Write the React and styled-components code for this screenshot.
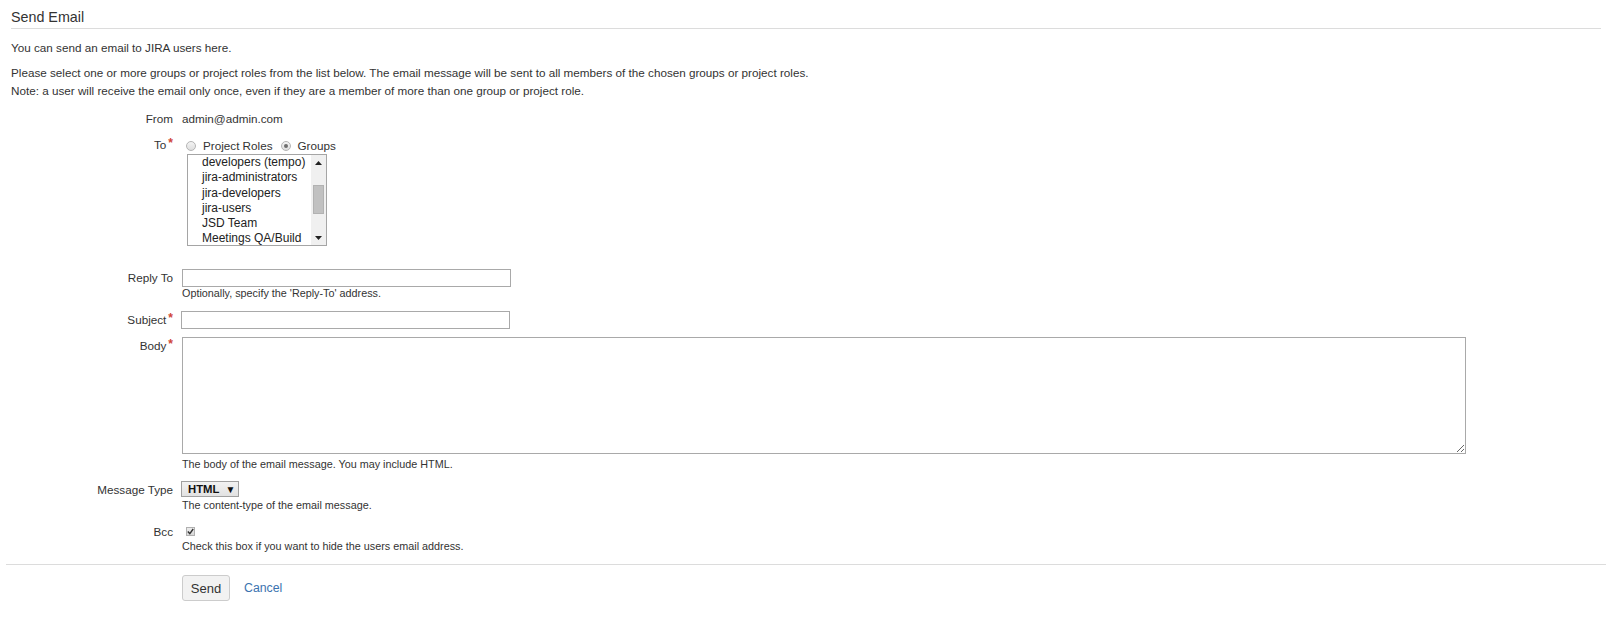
import styled, { createGlobalStyle } from "styled-components";

const GlobalStyle = createGlobalStyle`
  body {
    margin: 0;
    background: #fff;
    color: #333;
    font-family: "Liberation Sans", Arial, sans-serif;
  }
`;

const groups = [
  "developers (tempo)",
  "jira-administrators",
  "jira-developers",
  "jira-users",
  "JSD Team",
  "Meetings QA/Build",
];

const App = () => {
  return (
    <>
      <GlobalStyle />
      <Page>
        <Header>
          <Title>Send Email</Title>
        </Header>
        <Intro>
          <Text $top={10}>You can send an email to JIRA users here.</Text>
          <Text $top={8} $lh={17.5}>
            Please select one or more groups or project roles from the list
            below. The email message will be sent to all members of the chosen
            groups or project roles.
            <br />
            Note: a user will receive the email only once, even if they are a
            member of more than one group or project role.
          </Text>
        </Intro>

        <Group $top={11}>
          <Label>From</Label>
          <Field>
            <Value>admin@admin.com</Value>
          </Field>
        </Group>

        <Group $top={9}>
          <Label $lh={16}>
            To<Req>*</Req>
          </Label>
          <Field>
            <RadioRow>
              <Radio />
              <RadioText>Project Roles</RadioText>
              <Radio $checked />
              <RadioText>Groups</RadioText>
            </RadioRow>
            <ListBox>
              <Options>
                {groups.map((g) => (
                  <Option key={g}>{g}</Option>
                ))}
              </Options>
              <ScrollBar>
                <Arrow>
                  <svg width="7" height="4" viewBox="0 0 7 4">
                    <path d="M0 4 L3.5 0 L7 4 Z" fill="#222" />
                  </svg>
                </Arrow>
                <Track>
                  <Thumb />
                </Track>
                <Arrow>
                  <svg width="7" height="4" viewBox="0 0 7 4">
                    <path d="M0 0 L3.5 4 L7 0 Z" fill="#222" />
                  </svg>
                </Arrow>
              </ScrollBar>
            </ListBox>
          </Field>
        </Group>

        <Group $top={23}>
          <Label>Reply To</Label>
          <Field>
            <Input type="text" />
            <Hint>Optionally, specify the 'Reply-To' address.</Hint>
          </Field>
        </Group>

        <Group $top={11}>
          <Label>
            Subject<Req>*</Req>
          </Label>
          <Field>
            <Input type="text" $shift={-1} />
          </Field>
        </Group>

        <Group $top={8}>
          <Label>
            Body<Req>*</Req>
          </Label>
          <Field>
            <TextArea />
            <Hint $top={4}>
              The body of the email message. You may include HTML.
            </Hint>
          </Field>
        </Group>

        <Group $top={10}>
          <Label $lh={17}>Message Type</Label>
          <Field>
            <Select>
              <b>HTML</b>
              <Caret>▼</Caret>
            </Select>
            <Hint $top={2}>The content-type of the email message.</Hint>
          </Field>
        </Group>

        <Group $top={11}>
          <Label $lh={17}>Bcc</Label>
          <Field>
            <CheckRow>
              <CheckBox>
                <svg width="7" height="7" viewBox="0 0 7 7">
                  <path
                    d="M0.8 3.6 L2.8 5.6 L6.2 1"
                    stroke="#333"
                    strokeWidth="1.4"
                    fill="none"
                  />
                </svg>
              </CheckBox>
            </CheckRow>
            <Hint>Check this box if you want to hide the users email address.</Hint>
          </Field>
        </Group>

        <Footer>
          <Button>Send</Button>
          <CancelLink href="#">Cancel</CancelLink>
        </Footer>
      </Page>
    </>
  );
};

const Page = styled.div`
  padding: 0 8px 0 6px;
  font-size: 11.7px;
`;

const Header = styled.div`
  margin: 0 5px;
  padding: 8px 0 2px;
  border-bottom: 1px solid #dcdcdc;
`;

const Title = styled.h2`
  margin: 0;
  font-size: 14.3px;
  font-weight: normal;
  line-height: 18px;
  color: #333;
`;

const Intro = styled.div`
  margin: 0 5px;
`;

const Text = styled.p`
  margin: ${(p) => p.$top}px 0 0;
  line-height: ${(p) => p.$lh || 17}px;
`;

const Group = styled.div`
  display: flex;
  margin-top: ${(p) => p.$top}px;
`;

const Label = styled.div`
  flex: none;
  width: 167px;
  text-align: right;
  line-height: ${(p) => p.$lh || 18}px;
`;

const Req = styled.span`
  color: #d04437;
  font-size: 12px;
  font-weight: bold;
  margin-left: 2px;
  position: relative;
  top: -2px;
`;

const Field = styled.div`
  flex: 1;
  display: flex;
  flex-direction: column;
  align-items: flex-start;
  margin-left: 9px;
  min-width: 0;
`;

const Value = styled.div`
  line-height: 18px;
`;

const RadioRow = styled.div`
  display: flex;
  align-items: center;
  height: 17px;
  margin-left: 4px;
`;

const Radio = styled.span`
  width: 10px;
  height: 10px;
  box-sizing: border-box;
  border-radius: 50%;
  border: 1px solid #b4b4b4;
  background: linear-gradient(#f4f4f4, #dedede);
  display: flex;
  align-items: center;
  justify-content: center;
  margin-right: 7px;
  &::after {
    content: "";
    display: ${(p) => (p.$checked ? "block" : "none")};
    width: 4px;
    height: 4px;
    border-radius: 50%;
    background: #6e6e6e;
  }
`;

const RadioText = styled.span`
  margin-right: 8px;
  line-height: 17px;
`;

const ListBox = styled.div`
  display: flex;
  width: 140px;
  height: 92px;
  box-sizing: border-box;
  border: 1px solid #a5a5a5;
  margin-left: 5px;
  overflow: hidden;
  background: #fff;
`;

const Options = styled.div`
  flex: 1;
  padding-left: 14px;
  overflow: hidden;
`;

const Option = styled.div`
  font-size: 12px;
  line-height: 15.3px;
  white-space: nowrap;
  color: #222;
`;

const ScrollBar = styled.div`
  flex: none;
  width: 15px;
  display: flex;
  flex-direction: column;
  background: #f0f0f0;
`;

const Arrow = styled.div`
  flex: none;
  height: 15px;
  display: flex;
  align-items: center;
  justify-content: center;
`;

const Track = styled.div`
  flex: 1;
  padding-top: 15px;
`;

const Thumb = styled.div`
  width: 11px;
  height: 29px;
  margin: 0 auto;
  box-sizing: border-box;
  background: #c1c1c1;
  border: 1px solid #b2b2b2;
`;

const Input = styled.input`
  box-sizing: border-box;
  width: 329px;
  height: 18px;
  margin: 0 0 0 ${(p) => p.$shift || 0}px;
  padding: 0 2px;
  border: 1px solid #a9a9a9;
  font: inherit;
  outline: none;
`;

const TextArea = styled.textarea`
  display: block;
  box-sizing: border-box;
  width: 1284px;
  height: 117px;
  margin: 0;
  border: 1px solid #a9a9a9;
  font: inherit;
  outline: none;
`;

const Hint = styled.div`
  font-size: 10.8px;
  line-height: 13px;
  margin-top: ${(p) => p.$top || 0}px;
`;

const Select = styled.div`
  box-sizing: border-box;
  display: flex;
  align-items: center;
  width: 58px;
  height: 16px;
  margin-left: -1px;
  padding-left: 6px;
  border: 1px solid #a0a0a0;
  background: linear-gradient(#f2f2f2, #e2e2e2);
  font-size: 11.3px;
  color: #111;
`;

const Caret = styled.span`
  font-size: 10px;
  margin-left: 6px;
  color: #111;
`;

const CheckRow = styled.div`
  height: 17px;
  display: flex;
  align-items: center;
  margin-left: 4px;
`;

const CheckBox = styled.span`
  width: 9px;
  height: 9px;
  box-sizing: border-box;
  border: 1px solid #b0b0b0;
  background: linear-gradient(#ececec, #d8d8d8);
  display: flex;
  align-items: center;
  justify-content: center;
`;

const Footer = styled.div`
  display: flex;
  align-items: center;
  margin-top: 11px;
  padding: 10px 0 0 176px;
  border-top: 1px solid #dcdcdc;
`;

const Button = styled.button`
  box-sizing: border-box;
  width: 48px;
  height: 26px;
  padding: 0;
  border: 1px solid #cccccc;
  border-radius: 3px;
  background: #f2f2f2;
  color: #333;
  font-family: inherit;
  font-size: 13px;
  cursor: pointer;
`;

const CancelLink = styled.a`
  margin-left: 14px;
  color: #3b73af;
  font-size: 12.3px;
  text-decoration: none;
`;

export default App;
